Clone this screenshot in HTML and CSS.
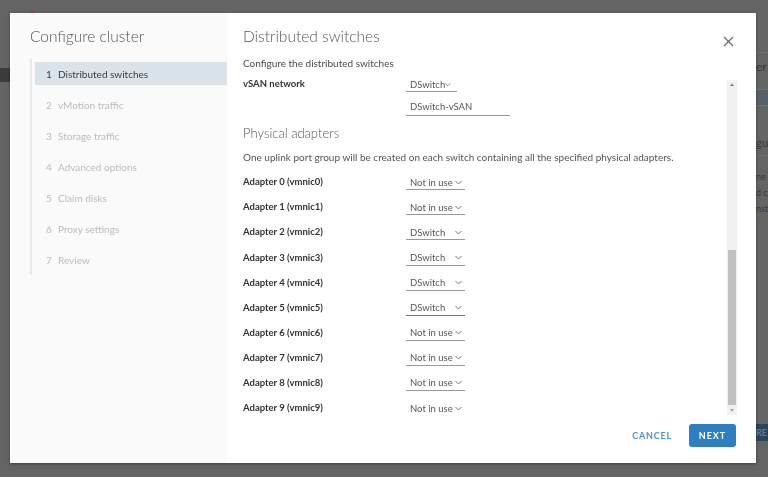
FILE: index.html
```html
<!DOCTYPE html>
<html lang="en">
<head>
    <meta charset="UTF-8">
    <meta name="viewport" content="width=device-width, initial-scale=1.0">
    <title>Configure cluster</title>
    <link rel="stylesheet" href="styles.css">
</head>
<body>
    <!-- dimmed page behind the dialog, only its edges show -->
    <div class="app">
        <div class="app-left">
            <span class="app-dot"></span>
            <div class="app-side"></div>
        </div>
        <div class="app-right">
            <span class="app-text t1">er</span>
            <div class="app-band"></div>
            <span class="app-text t2">gu</span>
            <div class="app-lines">
                <span>ne</span>
                <span>d c</span>
                <span>nst</span>
            </div>
            <span class="app-btn">RE</span>
        </div>
    </div>

    <div class="modal">
        <div class="steps">
            <h1 class="modal-title">Configure cluster</h1>
            <ul class="step-list">
                <li class="step active"><span class="num">1</span>Distributed switches</li>
                <li class="step"><span class="num">2</span>vMotion traffic</li>
                <li class="step"><span class="num">3</span>Storage traffic</li>
                <li class="step"><span class="num">4</span>Advanced options</li>
                <li class="step"><span class="num">5</span>Claim disks</li>
                <li class="step"><span class="num">6</span>Proxy settings</li>
                <li class="step"><span class="num">7</span>Review</li>
            </ul>
        </div>

        <div class="page">
            <div class="page-head">
                <h2>Distributed switches</h2>
                <button class="close" aria-label="Close">
                    <svg width="11" height="11" viewBox="0 0 11 11"><path d="M1 1 L10 10 M10 1 L1 10" stroke="#6b6b6b" stroke-width="1.3" fill="none"/></svg>
                </button>
            </div>
            <p class="page-sub">Configure the distributed switches</p>

            <div class="scroll">
                <div class="scroll-body">
                    <div class="row">
                        <label>vSAN network</label>
                        <div class="select narrow">DSwitch<svg class="chev" width="7" height="5" viewBox="0 0 7 5"><path d="M0.5 1 L3.5 4 L6.5 1" stroke="#777" fill="none"/></svg></div>
                    </div>
                    <div class="row">
                        <label></label>
                        <div class="input">DSwitch-vSAN</div>
                    </div>

                    <h3>Physical adapters</h3>
                    <p class="desc">One uplink port group will be created on each switch containing all the specified physical adapters.</p>

                    <div class="row">
                        <label>Adapter 0 (vmnic0)</label>
                        <div class="select">Not in use<svg class="chev" width="7" height="5" viewBox="0 0 7 5"><path d="M0.5 1 L3.5 4 L6.5 1" stroke="#777" fill="none"/></svg></div>
                    </div>
                    <div class="row">
                        <label>Adapter 1 (vmnic1)</label>
                        <div class="select">Not in use<svg class="chev" width="7" height="5" viewBox="0 0 7 5"><path d="M0.5 1 L3.5 4 L6.5 1" stroke="#777" fill="none"/></svg></div>
                    </div>
                    <div class="row">
                        <label>Adapter 2 (vmnic2)</label>
                        <div class="select">DSwitch<svg class="chev" width="7" height="5" viewBox="0 0 7 5"><path d="M0.5 1 L3.5 4 L6.5 1" stroke="#777" fill="none"/></svg></div>
                    </div>
                    <div class="row">
                        <label>Adapter 3 (vmnic3)</label>
                        <div class="select">DSwitch<svg class="chev" width="7" height="5" viewBox="0 0 7 5"><path d="M0.5 1 L3.5 4 L6.5 1" stroke="#777" fill="none"/></svg></div>
                    </div>
                    <div class="row">
                        <label>Adapter 4 (vmnic4)</label>
                        <div class="select">DSwitch<svg class="chev" width="7" height="5" viewBox="0 0 7 5"><path d="M0.5 1 L3.5 4 L6.5 1" stroke="#777" fill="none"/></svg></div>
                    </div>
                    <div class="row">
                        <label>Adapter 5 (vmnic5)</label>
                        <div class="select focused">DSwitch<svg class="chev" width="7" height="5" viewBox="0 0 7 5"><path d="M0.5 1 L3.5 4 L6.5 1" stroke="#777" fill="none"/></svg></div>
                    </div>
                    <div class="row">
                        <label>Adapter 6 (vmnic6)</label>
                        <div class="select">Not in use<svg class="chev" width="7" height="5" viewBox="0 0 7 5"><path d="M0.5 1 L3.5 4 L6.5 1" stroke="#777" fill="none"/></svg></div>
                    </div>
                    <div class="row">
                        <label>Adapter 7 (vmnic7)</label>
                        <div class="select">Not in use<svg class="chev" width="7" height="5" viewBox="0 0 7 5"><path d="M0.5 1 L3.5 4 L6.5 1" stroke="#777" fill="none"/></svg></div>
                    </div>
                    <div class="row">
                        <label>Adapter 8 (vmnic8)</label>
                        <div class="select">Not in use<svg class="chev" width="7" height="5" viewBox="0 0 7 5"><path d="M0.5 1 L3.5 4 L6.5 1" stroke="#777" fill="none"/></svg></div>
                    </div>
                    <div class="row">
                        <label>Adapter 9 (vmnic9)</label>
                        <div class="select">Not in use<svg class="chev" width="7" height="5" viewBox="0 0 7 5"><path d="M0.5 1 L3.5 4 L6.5 1" stroke="#777" fill="none"/></svg></div>
                    </div>
                </div>
                <div class="scrollbar">
                    <svg width="10" height="10" viewBox="0 0 10 10"><path d="M3 6 L5 3.5 L7 6 Z" fill="#777"/></svg>
                    <div class="track"><div class="thumb"></div></div>
                    <svg width="10" height="10" viewBox="0 0 10 10"><path d="M3 4 L5 6.5 L7 4 Z" fill="#999"/></svg>
                </div>
            </div>

            <div class="footer">
                <button class="btn-link">CANCEL</button>
                <button class="btn-primary">NEXT</button>
            </div>
        </div>
    </div>
</body>
</html>
```

FILE: styles.css
```css
body {
    margin: 0;
    padding: 0;
    width: 768px;
    height: 477px;
    overflow: hidden;
    background-color: #646464;
    font-family: Lato, "Open Sans", sans-serif;
}

/* background page, dimmed */
.app {
    height: 477px;
    display: flex;
    justify-content: space-between;
}
.app-left {
    width: 10px;
    display: flex;
    flex-direction: column;
}
.app-dot {
    width: 5px;
    height: 5px;
    border-radius: 50%;
    background-color: #8a4a4a;
    margin: 10px 0 0 30px;
}
.app-side {
    width: 10px;
    height: 14px;
    margin-top: 53px;
    background-color: #3c3c3c;
}
.app-right {
    width: 12px;
    display: flex;
    flex-direction: column;
    border-top: 1px solid #707070;
    margin-top: 52px;
    color: #383838;
    overflow: hidden;
    white-space: nowrap;
}
.app-text {
    font-size: 12px;
    line-height: 14px;
}
.t1 {
    margin-top: 7px;
    padding-bottom: 15px;
    border-bottom: 1px solid #727272;
}
.app-band {
    height: 15px;
    background-color: #56606a;
    border-bottom: 1px solid #727272;
}
.t2 {
    margin-top: 30px;
    padding-bottom: 5px;
    border-bottom: 1px solid #6e6e6e;
    font-size: 11.5px;
}
.app-lines {
    display: flex;
    flex-direction: column;
    padding-top: 13px;
    font-size: 9px;
    line-height: 16px;
}
.app-btn {
    margin-top: 207px;
    height: 17px;
    background-color: #2a4558;
    color: #66798a;
    font-size: 9px;
    font-weight: bold;
    line-height: 17px;
}

/* dialog */
.modal {
    position: fixed;
    left: 10px;
    top: 13px;
    width: 746px;
    height: 450px;
    display: flex;
    background-color: #fff;
    box-shadow: 0 1px 3px rgba(0, 0, 0, 0.35);
}
.steps {
    width: 217px;
    background-color: #fafafa;
    padding: 14px 0 0 20px;
    box-sizing: border-box;
}
.modal-title {
    margin: 0 0 14px 0;
    font-size: 15.5px;
    font-weight: 300;
    color: #565656;
    line-height: 18px;
}
.step-list {
    list-style: none;
    margin: 0;
    padding: 3px 0 4px 3px;
    border-left: 2px solid #e9e9e9;
    display: flex;
    flex-direction: column;
    gap: 8px;
}
.step {
    height: 23px;
    display: flex;
    align-items: center;
    padding-left: 11px;
    font-size: 10px;
    color: #bcbcbc;
}
.step .num {
    width: 12px;
}
.step.active {
    background-color: #dbe3ea;
    color: #3b3b3b;
}

.page {
    flex: 1;
    display: flex;
    flex-direction: column;
    padding: 14px 19px 16px 16px;
}
.page-head {
    display: flex;
    justify-content: space-between;
    align-items: flex-start;
}
.page-head h2 {
    margin: 0;
    font-size: 15.5px;
    font-weight: 300;
    color: #565656;
    line-height: 18px;
}
.close {
    border: none;
    background: none;
    padding: 0;
    margin: 8px 3px 0 0;
    cursor: pointer;
}
.page-sub {
    margin: 7px 0 0 0;
    font-size: 10px;
    color: #4a4a4a;
    line-height: 12px;
}

.scroll {
    flex: 1;
    display: flex;
    margin-top: 2px;
    overflow: hidden;
}
.scroll-body {
    flex: 1;
}
.row {
    height: 25.1px;
    display: flex;
    align-items: center;
}
.row label {
    width: 163px;
    font-size: 9.5px;
    font-weight: bold;
    color: #333;
}
.select {
    width: 59px;
    height: 15px;
    box-sizing: border-box;
    border-bottom: 1px solid #999;
    padding-left: 4px;
    display: flex;
    align-items: center;
    justify-content: space-between;
    font-size: 9.5px;
    color: #555;
    margin-top: 2px;
}
.select .chev {
    margin-right: 3px;
}
.select.narrow {
    width: 51px;
}
.select.narrow .chev {
    margin-right: 6px;
}
.select.focused {
    border-bottom-color: #2e83c6;
}
.input {
    width: 104px;
    height: 15px;
    box-sizing: border-box;
    border-bottom: 1px solid #999;
    padding-left: 4px;
    font-size: 9.5px;
    color: #555;
    margin-top: 0;
}
.scroll-body h3 {
    margin: 4px 0 0 0;
    font-size: 13px;
    font-weight: 300;
    color: #565656;
    line-height: 16px;
}
.desc {
    margin: 10px 0 6px 0;
    font-size: 10px;
    color: #555;
    line-height: 12px;
}

.scrollbar {
    width: 10px;
    display: flex;
    flex-direction: column;
    background-color: #f1f1f1;
    margin-top: 9px;
}
.scrollbar svg {
    display: block;
}
.track {
    flex: 1;
    display: flex;
    flex-direction: column;
    justify-content: flex-end;
}
.thumb {
    height: 155px;
    margin: 0 1px;
    background-color: #c1c1c1;
}

.footer {
    display: flex;
    justify-content: flex-end;
    align-items: center;
    gap: 17px;
    padding-top: 9px;
    margin-right: 1px;
}
.btn-link {
    border: none;
    background: none;
    font-family: inherit;
    font-size: 9px;
    font-weight: bold;
    letter-spacing: 0.8px;
    color: #4b93cc;
    padding: 0;
    cursor: pointer;
}
.btn-primary {
    width: 47px;
    height: 23px;
    border: none;
    border-radius: 3px;
    background-color: #2d7fc2;
    color: #fff;
    font-family: inherit;
    font-size: 9px;
    font-weight: bold;
    letter-spacing: 1px;
    cursor: pointer;
}
```
